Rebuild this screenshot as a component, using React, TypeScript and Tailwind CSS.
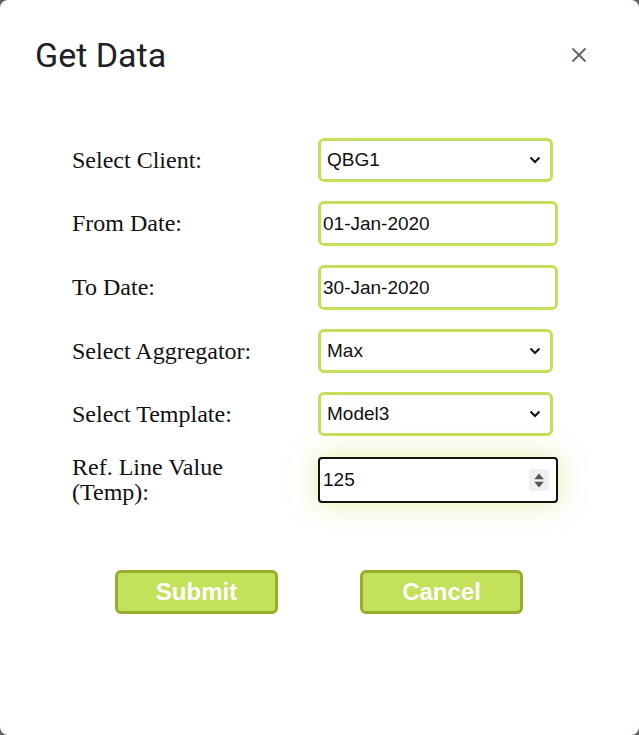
import { X } from "lucide-react";

const labelCls = "w-[246px] shrink-0 text-[24px] leading-[25px] text-[#111]";
const boxCls =
  "h-[44px] rounded-[6px] border-[3px] border-[#c3e05b] bg-white font-['Liberation_Sans',Arial,sans-serif] text-[19px] text-[#111] outline-none";

const Chevron = () => (
  <svg
    width="12"
    height="8"
    viewBox="0 0 12 8"
    className="pointer-events-none absolute right-[12px] top-1/2 -translate-y-1/2"
  >
    <path d="M1.5 1.5 L6 6 L10.5 1.5" fill="none" stroke="#111" strokeWidth="2" />
  </svg>
);

const SelectRow = ({ label, value }: { label: string; value: string }) => (
  <div className="flex items-center">
    <span className={labelCls}>{label}</span>
    <div className="relative">
      <div className={`${boxCls} flex w-[235px] items-center pl-[6px]`}>{value}</div>
      <Chevron />
    </div>
  </div>
);

const InputRow = ({ label, value }: { label: string; value: string }) => (
  <div className="flex items-center">
    <span className={labelCls}>{label}</span>
    <input
      readOnly
      value={value}
      className={`${boxCls} h-[45px] w-[240px] px-[2px]`}
    />
  </div>
);

export default function App() {
  return (
    <div className="h-[735px] w-[639px] bg-[#5f5f5f] font-['Liberation_Sans',Arial,sans-serif]">
      <div className="flex h-full flex-col rounded-[8px] bg-white">
        {/* header */}
        <div className="flex items-center justify-between pl-[35px] pr-[48px] pt-[35px]">
          <h1 className="font-['Roboto',sans-serif] text-[34px] font-normal leading-[40px] text-[#202124]">
            Get Data
          </h1>
          <X size={24} strokeWidth={1.8} className="text-[#5f6368]" />
        </div>

        {/* form */}
        <div className="mt-[63px] flex flex-col gap-[19px] pl-[72px] font-['Liberation_Serif','Times_New_Roman',serif]">
          <SelectRow label="Select Client:" value="QBG1" />
          <InputRow label="From Date:" value="01-Jan-2020" />
          <InputRow label="To Date:" value="30-Jan-2020" />
          <SelectRow label="Select Aggregator:" value="Max" />
          <SelectRow label="Select Template:" value="Model3" />
          <div className="flex items-center">
            <span className={labelCls}>
              Ref. Line Value
              <br />
              (Temp):
            </span>
            <div className="relative flex h-[46px] w-[240px] items-center rounded-[4px] border-2 border-[#111] bg-white pl-[3px] font-['Liberation_Sans',Arial,sans-serif] text-[19px] text-[#111] shadow-[0_0_26px_rgba(195,224,91,0.55)]">
              125
              <div className="absolute right-[7px] top-1/2 flex h-[21px] w-[20px] -translate-y-1/2 flex-col items-center justify-center gap-[2px] bg-[#efefef]">
                <svg width="10" height="6" viewBox="0 0 10 6">
                  <path d="M0 6 L5 0 L10 6 Z" fill="#555" />
                </svg>
                <svg width="10" height="6" viewBox="0 0 10 6">
                  <path d="M0 0 L10 0 L5 6 Z" fill="#555" />
                </svg>
              </div>
            </div>
          </div>
        </div>

        {/* buttons */}
        <div className="mt-[65px] flex gap-[82px] pl-[115px]">
          <button className="h-[44px] w-[163px] rounded-[6px] border-[3px] border-[#97ad2d] bg-[#c3e15b] text-[24px] font-bold text-white">
            Submit
          </button>
          <button className="h-[44px] w-[163px] rounded-[6px] border-[3px] border-[#97ad2d] bg-[#c3e15b] text-[24px] font-bold text-white">
            Cancel
          </button>
        </div>
      </div>
    </div>
  );
}
